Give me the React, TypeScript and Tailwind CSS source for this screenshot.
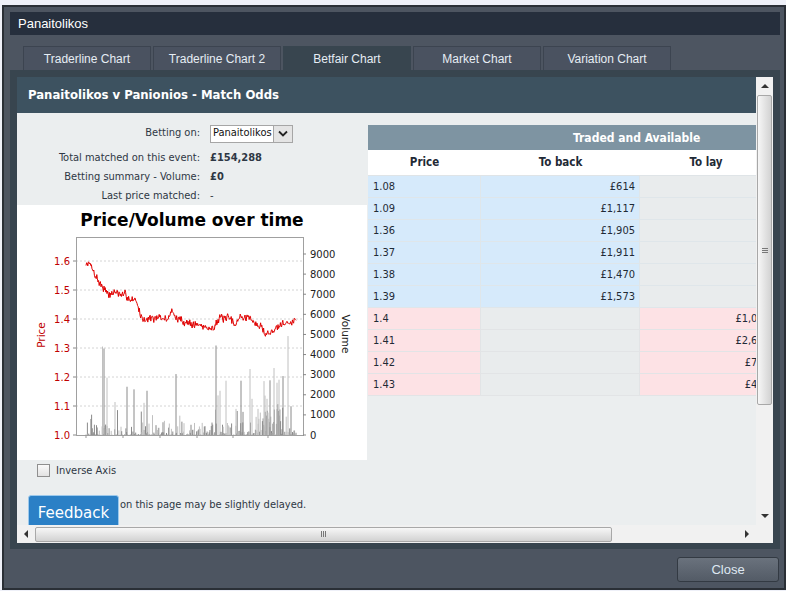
import React from 'react'

const BODY_FONT = "font-['DejaVu_Sans_Condensed','DejaVu_Sans',sans-serif]"
const UI_FONT = "font-['Liberation_Sans',Arial,sans-serif]"

const TABS = ['Traderline Chart', 'Traderline Chart 2', 'Betfair Chart', 'Market Chart', 'Variation Chart']

const BACK_ROWS = [
  ['1.08', '£614'],
  ['1.09', '£1,117'],
  ['1.36', '£1,905'],
  ['1.37', '£1,911'],
  ['1.38', '£1,470'],
  ['1.39', '£1,573'],
]
const LAY_ROWS = [
  ['1.4', '£1,046'],
  ['1.41', '£2,613'],
  ['1.42', '£768'],
  ['1.43', '£432'],
]

// price path key points, page x -> price
const PRICE_KEYS: [number, number][] = [
  [86, 1.58], [88, 1.6], [91, 1.58], [96, 1.55], [100, 1.52], [104, 1.51], [108, 1.48],
  [112, 1.49], [116, 1.495], [120, 1.48], [126, 1.48], [131, 1.47], [136, 1.465], [139, 1.43],
  [142, 1.4], [150, 1.405], [160, 1.4], [168, 1.4], [172, 1.435], [176, 1.4], [186, 1.39],
  [196, 1.38], [204, 1.375], [210, 1.365], [214, 1.38], [219, 1.4], [230, 1.4], [234, 1.38],
  [239, 1.405], [250, 1.405], [256, 1.38], [262, 1.37], [266, 1.35], [273, 1.355], [278, 1.38],
  [284, 1.395], [290, 1.385], [296, 1.395],
]

// big volume spikes: page x, volume, dark?
const SPIKES: [number, number, boolean][] = [
  [102.5, 4400, false], [104, 4300, true], [107, 2850, false], [115, 1640, false], [127, 2400, true],
  [134, 2270, true], [144, 1600, false], [147, 2200, true], [176, 3030, true], [216, 4450, true],
  [218, 1970, false], [220, 2200, false], [226, 2700, false], [236, 1300, false], [241, 2700, true],
  [243, 1150, true], [250, 3280, false], [252, 1800, false], [258, 1300, false], [264, 2680, false],
  [265, 1960, false], [267, 1800, false], [270, 2720, true], [274, 3330, false], [277, 2600, false],
  [279, 2750, false], [283, 2930, true], [288, 4920, false], [291, 1430, true], [294, 220, true],
]

function rng(seed: number) {
  let s = seed
  return () => {
    s = (s * 1664525 + 1013904223) >>> 0
    return s / 4294967296
  }
}

function priceAt(x: number) {
  for (let i = 1; i < PRICE_KEYS.length; i++) {
    const [x0, p0] = PRICE_KEYS[i - 1]
    const [x1, p1] = PRICE_KEYS[i]
    if (x <= x1) return p0 + ((p1 - p0) * (x - x0)) / (x1 - x0)
  }
  return PRICE_KEYS[PRICE_KEYS.length - 1][1]
}

const priceY = (p: number) => 230 - (p - 1) * 290
const volY = (v: number) => 230 - v * 0.02011

function PriceVolumeChart() {
  const r = rng(7)
  const pts: string[] = []
  let drift = 0
  for (let x = 86; x <= 296; x += 0.6) {
    drift = drift * 0.6 + (r() - 0.5) * 0.014
    const p = priceAt(x) + drift + (r() - 0.5) * 0.02
    pts.push(`${(x - 17).toFixed(1)},${priceY(p).toFixed(1)}`)
  }

  const bars: { x: number; v: number; dark: boolean }[] = []
  for (let x = 86; x <= 296; x += 0.7) {
    let v = Math.pow(r(), 3) * 650
    if (r() < 0.08) v = r() * 1300
    if (x > 255 && x < 285 && r() < 0.5) v = 500 + r() * 1100
    bars.push({ x, v, dark: r() < 0.55 })
  }
  SPIKES.forEach(([x, v, dark]) => bars.push({ x, v, dark }))

  const priceTicks = [1.0, 1.1, 1.2, 1.3, 1.4, 1.5, 1.6]
  const volTicks = [0, 1000, 2000, 3000, 4000, 5000, 6000, 7000, 8000, 9000]

  return (
    <svg width="350" height="255" className="block font-['DejaVu_Sans',sans-serif]">
      <text x="175" y="21" textAnchor="middle" fontSize="17" fontWeight="bold" fill="#000">
        Price/Volume over time
      </text>
      {priceTicks.slice(1).map((p) => (
        <line key={p} x1="59" x2="286" y1={priceY(p)} y2={priceY(p)} stroke="#d4d4d4" strokeDasharray="2 2" />
      ))}
      {bars.map((b, i) => (
        <line
          key={i}
          x1={(b.x - 17).toFixed(1)}
          x2={(b.x - 17).toFixed(1)}
          y1="230"
          y2={volY(b.v)}
          stroke={b.dark ? '#8a8a8a' : '#c0c0c0'}
          strokeWidth="1"
        />
      ))}
      <polyline points={pts.join(' ')} fill="none" stroke="#e00000" strokeWidth="1" />
      <rect x="59.5" y="32.5" width="227" height="198" fill="none" stroke="#a0a0a0" />
      {priceTicks.map((p) => (
        <g key={p}>
          <line x1="56" x2="59" y1={priceY(p)} y2={priceY(p)} stroke="#888" />
          <text x="53" y={priceY(p) + 3.5} textAnchor="end" fontSize="10" fill="#c00000">
            {p.toFixed(1)}
          </text>
        </g>
      ))}
      {volTicks.map((v) => (
        <g key={v}>
          <line x1="286" x2="289" y1={volY(v)} y2={volY(v)} stroke="#888" />
          <text x="293" y={volY(v) + 3.5} fontSize="10" fill="#222">
            {v}
          </text>
        </g>
      ))}
      {[69, 106, 143, 180, 216, 251].map((x) => (
        <line key={x} x1={x} x2={x} y1="230" y2="233" stroke="#999" />
      ))}
      <text x="0" y="0" fontSize="10.5" fill="#c00000" textAnchor="middle" transform="translate(28 130) rotate(-90)">
        Price
      </text>
      <text x="0" y="0" fontSize="10.5" fill="#222" textAnchor="middle" transform="translate(325 129) rotate(90)">
        Volume
      </text>
    </svg>
  )
}

function VScrollbar() {
  return (
    <div className="w-[17px] h-full bg-[#f1f1f1] flex flex-col items-center">
      <div className="h-[18px] w-full flex items-center justify-center">
        <div className="w-0 h-0 border-x-[4px] border-x-transparent border-b-[4px] border-b-[#333]" />
      </div>
      <div className="w-[15px] h-[310px] rounded-[2px] border border-[#a8a8a8] bg-gradient-to-r from-[#f7f7f7] to-[#d2d2d2] flex flex-col items-center justify-center gap-[1px]">
        <div className="w-[6px] h-px bg-[#777]" />
        <div className="w-[6px] h-px bg-[#777]" />
        <div className="w-[6px] h-px bg-[#777]" />
      </div>
      <div className="flex-1" />
      <div className="h-[18px] w-full flex items-center justify-center">
        <div className="w-0 h-0 border-x-[4px] border-x-transparent border-t-[4px] border-t-[#333]" />
      </div>
    </div>
  )
}

function HScrollbar() {
  return (
    <div className="w-[739px] h-full bg-[#f1f1f1] flex items-center">
      <div className="w-[18px] h-full flex items-center justify-center">
        <div className="w-0 h-0 border-y-[4px] border-y-transparent border-r-[4px] border-r-[#333]" />
      </div>
      <div className="w-[577px] h-[15px] rounded-[2px] border border-[#a8a8a8] bg-gradient-to-b from-[#f7f7f7] to-[#d2d2d2] flex items-center justify-center gap-[1px]">
        <div className="w-px h-[6px] bg-[#777]" />
        <div className="w-px h-[6px] bg-[#777]" />
        <div className="w-px h-[6px] bg-[#777]" />
      </div>
      <div className="flex-1" />
      <div className="w-[18px] h-full flex items-center justify-center">
        <div className="w-0 h-0 border-y-[4px] border-y-transparent border-l-[4px] border-l-[#333]" />
      </div>
    </div>
  )
}

function OddsTable() {
  return (
    <div className="w-[388px] overflow-hidden mt-[12px]">
      <div className="w-[404px] text-[11px] text-[#1f2a36]">
        <div className="h-[25px] bg-[#7e94a2] text-white font-bold text-[12px] flex items-center pl-[205px]">
          Traded and Available
        </div>
        <div className="h-[26px] bg-white grid grid-cols-[113px_159px_132px] items-center font-bold text-[11.5px] border-b border-[#dfe4e7] pt-px">
          <div className="text-center">Price</div>
          <div className="text-center">To back</div>
          <div className="text-center">To lay</div>
        </div>
        {BACK_ROWS.map(([price, amt]) => (
          <div key={price} className="h-[22px] grid grid-cols-[113px_159px_132px] border-b border-[#dfe6ea]">
            <div className="bg-[#d6eafb] border-r border-[#dfe6ea] pl-[5px] pt-px flex items-center">{price}</div>
            <div className="bg-[#d6eafb] border-r border-[#dfe6ea] pr-[4px] pt-px flex items-center justify-end">{amt}</div>
            <div className="bg-[#e9eced]" />
          </div>
        ))}
        {LAY_ROWS.map(([price, amt]) => (
          <div key={price} className="h-[22px] grid grid-cols-[113px_159px_132px] border-b border-[#e2e4e6]">
            <div className="bg-[#fde2e5] border-r border-[#e2e4e6] pl-[5px] pt-px flex items-center">{price}</div>
            <div className="bg-[#e9eced] border-r border-[#e2e4e6]" />
            <div className="bg-[#fde2e5] pr-[2px] pt-px flex items-center justify-end">{amt}</div>
          </div>
        ))}
      </div>
    </div>
  )
}

function InfoRow({ label, h, children }: { label: string; h: string; children: React.ReactNode }) {
  return (
    <div className={`flex items-center ${h}`}>
      <div className="w-[183px] text-right text-[#2e3744]">{label}</div>
      <div className="ml-[10px] text-[#2e3744]">{children}</div>
    </div>
  )
}

export default function App() {
  return (
    <div className="w-[786px] h-[591px] bg-[#eef0f8] pt-[5px] pl-[2px] overflow-hidden">
      <div className="w-[784px] h-[585px] border-2 border-[#2a2f36] bg-[#4d5561] pt-[5px] pl-[6px] pr-[4px] flex flex-col">
        <div className={`h-[23px] bg-[#262f3d] pl-[8px] flex items-center text-[13px] text-white ${UI_FONT}`}>
          Panaitolikos
        </div>

        <div className={`mt-[11px] h-[24px] flex gap-[2px] pl-[13px] ${UI_FONT} text-[12px] text-[#e6edf4]`}>
          {TABS.map((tab) => (
            <div
              key={tab}
              className={
                tab === 'Betfair Chart'
                  ? 'w-[128px] bg-[#38454f] border border-b-0 border-[#38454f] flex items-center justify-center'
                  : 'w-[128px] bg-[#4a5260] border border-b-0 border-[#3c4450] flex items-center justify-center'
              }
            >
              {tab}
            </div>
          ))}
        </div>

        <div className="h-[479px] bg-[#38454f] pt-[7px] px-[7px]">
          <div className="w-[756px] h-[466px] flex flex-col">
            <div className="flex h-[448px]">
              <div className={`w-[739px] h-full relative overflow-hidden bg-[#ebeeef] ${BODY_FONT} text-[11px]`}>
                <div className="h-[36px] bg-[#3d5260] flex items-center pl-[11px] text-white font-bold text-[13px]">
                  Panaitolikos v Panionios - Match Odds
                </div>
                <div className="flex gap-[1px]">
                  <div className="w-[350px] flex flex-col">
                    <div className="h-[92px] pt-[10px] flex flex-col">
                      <div className="flex items-center h-[21px]">
                        <div className="w-[183px] text-right text-[#2e3744]">Betting on:</div>
                        <div className="ml-[10px] w-[83px] h-[18px] bg-white border border-[#a6a6a6] flex items-center">
                          <span className="flex-1 pl-[2px] text-[#111] overflow-hidden whitespace-nowrap">Panaitolikos</span>
                          <span className="w-[19px] h-full bg-[#e4e4e4] border-l border-[#a6a6a6] flex items-center justify-center">
                            <svg width="10" height="7" viewBox="0 0 10 7">
                              <path d="M1 1.5 L5 5.5 L9 1.5" fill="none" stroke="#222" strokeWidth="1.8" />
                            </svg>
                          </span>
                        </div>
                      </div>
                      <div className="h-[4px]" />
                      <InfoRow label="Total matched on this event:" h="h-[20px]">
                        <span className="font-bold">£154,288</span>
                      </InfoRow>
                      <InfoRow label="Betting summary - Volume:" h="h-[19px]">
                        <span className="font-bold">£0</span>
                      </InfoRow>
                      <InfoRow label="Last price matched:" h="h-[18px]">
                        -
                      </InfoRow>
                    </div>
                    <div className="h-[255px] bg-white">
                      <PriceVolumeChart />
                    </div>
                    <div className="mt-[3px] h-[14px] pl-[20px] flex items-center gap-[6px] text-[#2e3744]">
                      <div className="w-[13px] h-[13px] border border-[#8f8f8f] bg-gradient-to-b from-[#fafafa] to-[#e2e2e2]" />
                      <span className="pt-[3px]">Inverse Axis</span>
                    </div>
                    <div className="mt-[20px] flex text-[#2e3744]">
                      <span className="w-[103px] text-right whitespace-pre">Information </span>
                      <span>on this page may be slightly delayed.</span>
                    </div>
                  </div>
                  <OddsTable />
                </div>

                <div className="absolute left-[11px] top-[418px] w-[91px] h-[34px] rounded-t-[3px] border border-[#9cc9ec] bg-[#2b80c6] text-white text-[15px] font-['DejaVu_Sans',sans-serif] flex items-start justify-center pt-[6px]">
                  Feedback
                </div>
              </div>
              <VScrollbar />
            </div>
            <div className="flex h-[18px]">
              <HScrollbar />
              <div className="w-[17px] h-full bg-[#f1f1f1]" />
            </div>
          </div>
        </div>

        <div className="flex justify-end mt-[8px] pr-[1px]">
          <div
            className={`w-[102px] h-[25px] rounded-[3px] border border-[#333a43] bg-gradient-to-b from-[#6a727d] to-[#535b66] flex items-center justify-center text-[13px] text-[#dfe8f2] ${UI_FONT}`}
          >
            Close
          </div>
        </div>
      </div>
    </div>
  )
}
